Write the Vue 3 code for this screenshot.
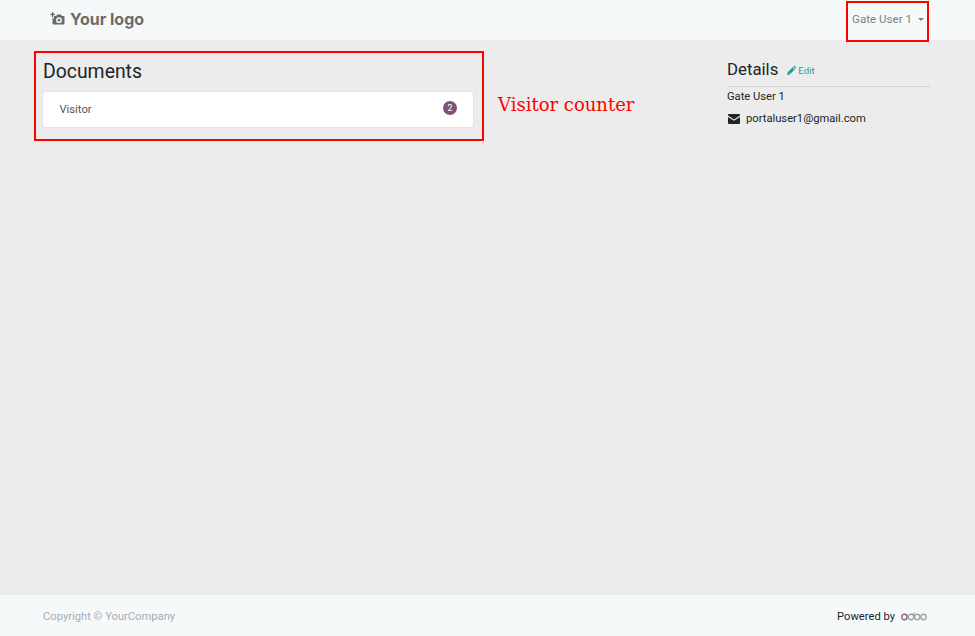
<script setup>
const documents = [{ name: 'Visitor', count: 2 }]
</script>

<template>
  <div class="page">
    <header class="topbar">
      <div class="logo">
        <svg class="logo-icon" width="15" height="14" viewBox="0 0 15 14">
          <path d="M2.6 0v5M0.4 2.5h4.4" stroke="#6b6b6b" stroke-width="1.3" fill="none" />
          <path fill="#6b6b6b" fill-rule="evenodd" d="M4 4h2.2l1-1.6h3.6l1 1.6h1.7a1 1 0 0 1 1 1v6.6a1 1 0 0 1-1 1H3.5a1 1 0 0 1-1-1V6.2h1.5zM9 5.3a2.9 2.9 0 1 0 0 5.8 2.9 2.9 0 0 0 0-5.8zM9 6.8a1.4 1.4 0 1 1 0 2.8 1.4 1.4 0 0 1 0-2.8z" />
        </svg>
        <span class="logo-text">Your logo</span>
      </div>
      <div class="user">
        <span>Gate User 1</span>
        <i class="caret"></i>
        <div class="mark mark-user"></div>
      </div>
    </header>

    <main class="content">
      <section class="docs">
        <h3 class="title">Documents</h3>
        <ul class="list">
          <li v-for="doc in documents" :key="doc.name" class="row">
            <span>{{ doc.name }}</span>
            <span class="badge">{{ doc.count }}</span>
          </li>
        </ul>
        <div class="mark mark-docs"></div>
        <span class="note">Visitor counter</span>
      </section>

      <aside class="details">
        <div class="details-head">
          <h4 class="details-title">Details</h4>
          <a class="edit">
            <svg width="9" height="9" viewBox="0 0 9 9">
              <path fill="#17a2a2" d="M0 9l.5-2.6L5.6 1.3l2.1 2.1-5.1 5.1zM6.2.7l.5-.5a.7.7 0 0 1 1 0l1.1 1.1a.7.7 0 0 1 0 1l-.5.5z" />
            </svg>
            Edit
          </a>
        </div>
        <div class="name">Gate User 1</div>
        <div class="mail">
          <svg width="12" height="10" viewBox="0 0 12 10">
            <path fill="#212529" d="M1 0h10a1 1 0 0 1 1 1v.6L6 5.4 0 1.600V1a1 1 0 0 1 1-1zM0 3l6 3.800L12 3v6a1 1 0 0 1-1 1H1a1 1 0 0 1-1-1z" />
          </svg>
          <span>portaluser1@gmail.com</span>
        </div>
      </aside>
    </main>

    <footer class="footer">
      <span class="copyright">Copyright © YourCompany</span>
      <span class="powered">
        Powered by
        <svg class="odoo" width="26" height="10" viewBox="0 0 26 10" fill="none" stroke-width="1.4">
          <circle cx="3.400" cy="6" r="2.700" stroke="#8f5f8a" />
          <circle cx="10" cy="6" r="2.700" stroke="#a3a3a3" />
          <path d="M12.700 6V1.500" stroke="#a3a3a3" />
          <circle cx="16.200" cy="6" r="2.700" stroke="#a3a3a3" />
          <circle cx="22.500" cy="6" r="2.700" stroke="#a3a3a3" />
        </svg>
      </span>
    </footer>
  </div>
</template>

<style>
html, body { margin: 0; }
</style>

<style scoped>
.page {
  min-height: 636px;
  display: flex;
  flex-direction: column;
  background: #ececec;
  font-family: Roboto, "Liberation Sans", sans-serif;
  font-size: 11.200px;
  color: #212529;
}
.topbar {
  height: 40px;
  background: #f6f9fa;
  display: flex;
  justify-content: space-between;
  padding: 0 51px 0 50px;
}
.logo {
  display: flex;
  align-items: center;
  gap: 5px;
  height: 37px;
  background: repeating-linear-gradient(135deg, transparent 0 6px, #f1f3f4 6px 7px);
  background-size: 111px 30px;
  background-position: -8px 4px;
  background-repeat: no-repeat;
}
.logo-text {
  font-family: Inter, sans-serif;
  font-weight: 700;
  font-size: 16px;
  color: #6b6b6b;
}
.user {
  position: relative;
  display: flex;
  align-items: center;
  gap: 6px;
  height: 38px;
  font-size: 11.600px;
  color: #7d8184;
}
.caret {
  width: 0;
  height: 0;
  border: 3.500px solid transparent;
  border-top-color: #7d8184;
  border-bottom: 0;
}
.mark {
  position: absolute;
  border: 2px solid #f00;
  box-sizing: border-box;
  pointer-events: none;
}
.mark-user {
  left: -6px;
  top: 1px;
  width: 83px;
  height: 41px;
}
.content {
  flex: 1;
  display: flex;
  justify-content: space-between;
  padding: 0 45px 0 42px;
}
.docs {
  position: relative;
  width: 432px;
}
.mark-docs {
  left: -8px;
  top: 11px;
  width: 450px;
  height: 90px;
}
.note {
  position: absolute;
  left: 456px;
  top: 54px;
  font-family: "DejaVu Serif", serif;
  font-size: 18px;
  color: #f00;
  white-space: nowrap;
}
.title {
  margin: 20px 0 7px 1px;
  font-size: 19.400px;
  font-weight: 400;
  line-height: 24px;
}
.list {
  list-style: none;
  margin: 0;
  padding: 0;
}
.row {
  height: 37px;
  box-sizing: border-box;
  padding: 0 16px 0 16.500px;
  display: flex;
  align-items: center;
  justify-content: space-between;
  background: #fff;
  border: 1px solid #e3e3e3;
  border-radius: 3px;
  color: #555;
}
.badge {
  width: 14px;
  height: 14px;
  margin-bottom: 3px;
  border-radius: 50%;
  background: #7c5477;
  color: #fff;
  font-size: 9px;
  line-height: 14px;
  text-align: center;
}
.details {
  width: 203px;
}
.details-head {
  display: flex;
  align-items: center;
  gap: 9px;
  margin-top: 17px;
  height: 24px;
  padding-bottom: 5px;
  border-bottom: 1px solid #d2d2d2;
}
.details-title {
  margin: 0;
  font-size: 16.800px;
  font-weight: 400;
}
.edit {
  display: flex;
  align-items: center;
  gap: 2px;
  font-size: 9.600px;
  color: #17a2a2;
  margin-top: 3px;
}
.name {
  margin-top: 3px;
  line-height: 13px;
}
.mail {
  display: flex;
  align-items: center;
  gap: 6px;
  margin-top: 9px;
  padding-left: 1px;
  line-height: 13px;
}
.footer {
  height: 41px;
  box-sizing: border-box;
  padding: 2px 48px 0 42px;
  background: #f6f9fa;
  display: flex;
  align-items: center;
  justify-content: space-between;
}
.copyright {
  margin-left: 1px;
  color: #a8adb3;
}
.powered {
  display: flex;
  align-items: center;
  gap: 6px;
  color: #212529;
}
.odoo {
  display: block;
  margin-top: -1px;
}
</style>
